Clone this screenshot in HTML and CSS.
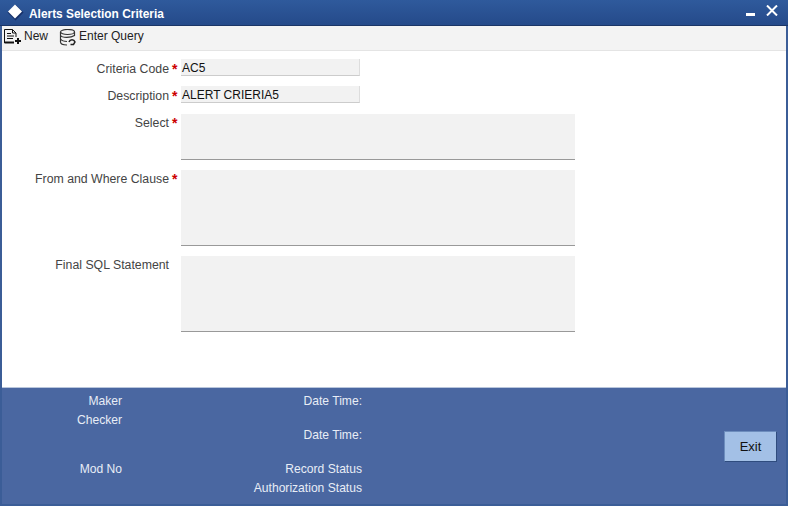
FILE: index.html
```html
<!DOCTYPE html>
<html lang="en">
<head>
<meta charset="UTF-8">
<title>Alerts Selection Criteria</title>
<link rel="stylesheet" href="styles.css">
</head>
<body>
<div class="window">
    <div class="title-bar">
        <div class="title-left">
            <svg class="logo" width="17" height="17" viewBox="0 0 17 17"><path d="M8.500 0.500 L16.500 8.500 L8.500 16.500 L0.500 8.500 Z" fill="#16306a"/><path d="M8 0.500 L15 7.500 L8 14.500 L1 7.500 Z" fill="#fff"/></svg>
            <span class="title-text">Alerts Selection Criteria</span>
        </div>
        <div class="title-right">
            <span class="win-min"></span>
            <svg width="12" height="11" viewBox="0 0 12 11"><path d="M1 0.500 L11 10.500 M11 0.500 L1 10.500" stroke="#fff" stroke-width="2" fill="none"/></svg>
        </div>
    </div>
    <div class="toolbar">
        <div class="tool">
            <svg width="18" height="15" viewBox="0 0 18 15" fill="none" stroke="#111" stroke-width="1"><path d="M0.500 14 V0.500 H8.500 L12 4 V8"/><path d="M8.500 0.500 V4 H12"/><path d="M3 4.500 H7 M3 7 H10 M3 9.500 H9"/><path d="M0.500 13.500 H10" stroke-width="2"/><path d="M14 9 V15 M11 12 H17" stroke-width="2"/></svg>
            <span>New</span>
        </div>
        <div class="tool">
            <svg width="18" height="17" viewBox="0 0 18 17" fill="none" stroke="#333" stroke-width="1.200"><ellipse cx="8.500" cy="3" rx="7" ry="2.500"/><path d="M1.500 3 V13 C1.500 15 5 16 8 16"/><path d="M15.500 3 V7"/><path d="M1.500 6.500 C3 9 12 9 15.500 6.500"/><path d="M1.500 10 C3 12 6 12.500 8 12.500"/><path d="M10 13 C11 10 15 10 16 13 L14.500 15.500 H11.500" stroke-width="1.500" stroke="#222"/></svg>
            <span>Enter Query</span>
        </div>
    </div>
    <div class="form">
        <div class="row">
            <label class="field-label">Criteria Code<em>*</em></label>
            <div class="input-short">AC5</div>
        </div>
        <div class="row row-last-short">
            <label class="field-label">Description<em>*</em></label>
            <div class="input-short">ALERT CRIERIA5</div>
        </div>
        <div class="row">
            <label class="field-label label-tall">Select<em>*</em></label>
            <div class="textarea select-area"></div>
        </div>
        <div class="row">
            <label class="field-label label-tall">From and Where Clause<em>*</em></label>
            <div class="textarea"></div>
        </div>
        <div class="row">
            <label class="field-label label-tall">Final SQL Statement<em></em></label>
            <div class="textarea"></div>
        </div>
    </div>
    <div class="footer">
        <div class="audit">
            <div class="audit-col col-names">
                <span>Maker</span>
                <span>Checker</span>
                <span class="gap-row">Mod No</span>
            </div>
            <div class="audit-col col-status">
                <span>Date Time:</span>
                <span class="date-two">Date Time:</span>
                <span class="status-row">Record Status</span>
                <span>Authorization Status</span>
            </div>
        </div>
        <button class="exit-btn" type="button">Exit</button>
    </div>
</div>
</body>
</html>
```

FILE: styles.css
```css
html, body {
    margin: 0;
    padding: 0;
    height: 100%;
}

body {
    font-family: "Liberation Sans", Arial, sans-serif;
    font-size: 12px;
    overflow: hidden;
}

.window {
    width: 788px;
    height: 506px;
    box-sizing: border-box;
    display: flex;
    flex-direction: column;
    border-left: 2px solid #3b5d97;
    border-right: 2px solid #3b5d97;
    background: #fff;
}

.title-bar {
    height: 25px;
    margin: 0 -2px;
    display: flex;
    justify-content: space-between;
    background: linear-gradient(#2f5a9c, #254a8a);
    color: #fff;
    border-bottom: 1px solid #1b3566;
}

.title-left {
    display: flex;
    align-items: center;
    padding-left: 7px;
}

.logo {
    margin-right: 5px;
}

.title-text {
    font-weight: bold;
    font-size: 11.9px;
    padding-top: 2px;
}

.title-right {
    display: flex;
    align-items: flex-start;
    gap: 11px;
    padding-right: 10px;
}

.win-min {
    width: 9px;
    height: 3px;
    background: #fff;
    margin-top: 13px;
}

.title-right svg {
    margin-top: 5px;
}

.toolbar {
    height: 24px;
    display: flex;
    align-items: flex-start;
    gap: 11px;
    padding-left: 2px;
    background: #f3f3f3;
    border-bottom: 1px solid #e4e4e4;
}

.tool {
    display: flex;
    align-items: flex-start;
    gap: 2px;
    color: #222;
    line-height: 18px;
    padding-top: 1px;
}

.tool svg {
    margin-top: 2px;
}

.form {
    flex: 1;
    padding-top: 8px;
}

.row {
    display: flex;
    margin-bottom: 10px;
}

.row-last-short {
    margin-bottom: 11px;
}

.field-label {
    width: 179px;
    height: 17px;
    box-sizing: border-box;
    padding-top: 1px;
    flex: none;
    display: flex;
    justify-content: flex-end;
    font-size: 12.3px;
    color: #444;
    line-height: 18px;
}

.label-tall {
    line-height: 16px;
}

.field-label em {
    width: 12px;
    flex: none;
    box-sizing: border-box;
    padding-left: 3px;
    font-style: normal;
    font-weight: bold;
    font-size: 14px;
    color: #c00;
}

.input-short {
    width: 179px;
    height: 17px;
    box-sizing: border-box;
    padding: 1px 0 0 1px;
    background: #f2f2f2;
    border-right: 1px solid #ddd;
    border-bottom: 1px solid #ccc;
    line-height: 17px;
    color: #111;
}

.textarea {
    width: 394px;
    height: 76px;
    box-sizing: border-box;
    background: #f2f2f2;
    border-bottom: 1px solid #999;
}

.select-area {
    height: 46px;
}

.footer {
    height: 119px;
    flex: none;
    box-sizing: border-box;
    display: flex;
    justify-content: space-between;
    background: #4a67a1;
    border-top: 1px solid #b9c6dc;
    border-bottom: 2px solid #3b5d97;
    color: #e8edf6;
}

.audit {
    display: flex;
}

.audit-col {
    display: flex;
    flex-direction: column;
    text-align: right;
    padding-top: 6px;
    line-height: 14px;
    font-size: 12.1px;
}

.col-names {
    width: 120px;
    gap: 5px;
}

.gap-row {
    margin-top: 30px;
}

.col-status {
    width: 240px;
}

.date-two {
    margin-top: 20px;
}

.status-row {
    margin-top: 20px;
    margin-bottom: 5px;
}

.exit-btn {
    width: 53px;
    height: 31px;
    margin: 43px 9px 0 0;
    padding: 0;
    font-family: inherit;
    font-size: 13px;
    font-weight: normal;
    color: #111;
    background: #a3c0e6;
    border: 1px solid;
    border-color: #6d8dbd #2f4c7e #2f4c7e #6d8dbd;
}
```
